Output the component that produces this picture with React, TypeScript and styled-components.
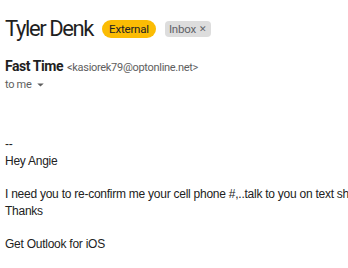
import React from "react";
import styled, { createGlobalStyle } from "styled-components";

const GlobalStyle = createGlobalStyle`
  body {
    margin: 0;
    background: #ffffff;
    overflow: hidden;
  }
`;

const Page = styled.div`
  width: 348px;
  height: 268px;
  padding: 14px 0 0 5px;
  box-sizing: border-box;
  overflow: hidden;
  white-space: nowrap;
`;

const SubjectRow = styled.div`
  display: flex;
  align-items: center;
  gap: 9px;
`;

const Subject = styled.h1`
  margin: 0;
  font-family: Roboto, "Liberation Sans", sans-serif;
  font-weight: 400;
  font-size: 22px;
  letter-spacing: -1.4px;
  line-height: 29px;
  color: #1f1f1f;
`;

const Badge = styled.span<{ $tone: "warn" | "label" }>`
  display: inline-flex;
  align-items: center;
  gap: 3px;
  box-sizing: border-box;
  font-family: Roboto, "Liberation Sans", sans-serif;
  font-size: 11.5px;
  letter-spacing: -0.2px;
  height: ${(p) => (p.$tone === "warn" ? "18px" : "16px")};
  padding: ${(p) => (p.$tone === "warn" ? "0 7px" : "0 4px")};
  border-radius: ${(p) => (p.$tone === "warn" ? "9px" : "4px")};
  background: ${(p) => (p.$tone === "warn" ? "#fbbc04" : "#dddddd")};
  color: ${(p) => (p.$tone === "warn" ? "#202124" : "#5f6368")};
`;

const Close = styled.span`
  font-size: 9px;
  color: #5f6368;
`;

const Sender = styled.div`
  margin-top: 14px;
  font-family: Roboto, "Liberation Sans", sans-serif;
  line-height: 17px;
`;

const SenderName = styled.span`
  font-weight: 700;
  font-size: 14px;
  letter-spacing: -0.45px;
  color: #1f1f1f;
`;

const SenderEmail = styled.span`
  font-size: 11px;
  letter-spacing: -0.3px;
  color: #5e5e5e;
  margin-left: 4px;
`;

const Recipient = styled.div`
  display: flex;
  align-items: center;
  gap: 6px;
  font-family: Roboto, "Liberation Sans", sans-serif;
  font-size: 11px;
  letter-spacing: -0.3px;
  line-height: 18px;
  color: #5e5e5e;
`;

const Body = styled.div`
  margin-top: 42px;
  font-family: "Liberation Sans", Arial, sans-serif;
  font-size: 12px;
  letter-spacing: -0.25px;
  line-height: 17px;
  color: #222222;
`;

const Line = styled.div<{ $gap?: boolean }>`
  margin-top: ${(p) => (p.$gap ? "16px" : "0")};
`;

const Caret = () => (
  <svg width="7" height="4" viewBox="0 0 8 5">
    <path d="M0 0.5h8L4 4.5z" fill="#5e5e5e" />
  </svg>
);

export default function App() {
  return (
    <>
      <GlobalStyle />
      <Page>
        <SubjectRow>
          <Subject>Tyler Denk</Subject>
          <Badge $tone="warn">External</Badge>
          <Badge $tone="label">
            Inbox <Close>✕</Close>
          </Badge>
        </SubjectRow>
        <Sender>
          <SenderName>Fast Time</SenderName>
          <SenderEmail>&lt;kasiorek79@optonline.net&gt;</SenderEmail>
        </Sender>
        <Recipient>
          to me <Caret />
        </Recipient>
        <Body>
          <Line>--</Line>
          <Line>Hey Angie</Line>
          <Line $gap>
            I need you to re-confirm me your cell phone #,..talk to you on text shortly
          </Line>
          <Line>Thanks</Line>
          <Line $gap>Get Outlook for iOS</Line>
        </Body>
      </Page>
    </>
  );
}
